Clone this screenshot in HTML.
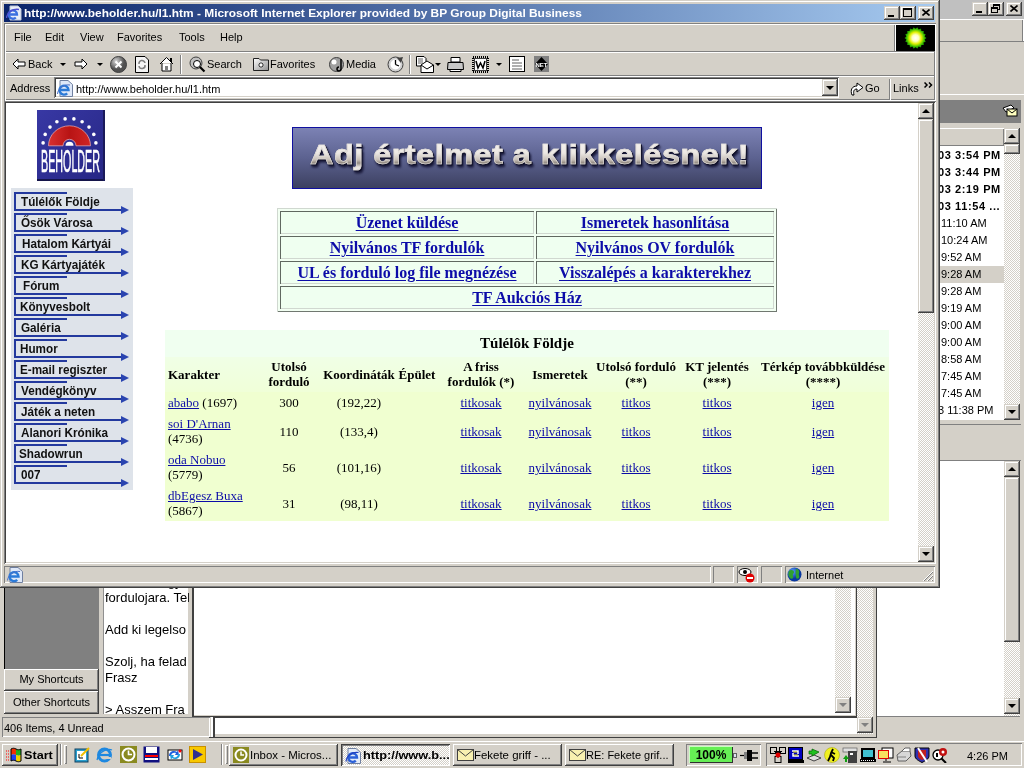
<!DOCTYPE html>
<html><head><meta charset="utf-8">
<style>
*{margin:0;padding:0;box-sizing:border-box}
html,body{-webkit-font-smoothing:antialiased;width:1024px;height:768px;overflow:hidden;background:#d4d0c8;font-family:"Liberation Sans",sans-serif;font-size:11px;color:#000;position:relative}
.a{position:absolute}
.face{background:#d4d0c8}
.rz{box-shadow:inset -1px -1px #404040,inset 1px 1px #fff,inset -2px -2px #808080}
.rz2{box-shadow:inset -1px -1px #404040,inset 1px 1px #d4d0c8,inset -2px -2px #808080,inset 2px 2px #fff}
.sk{box-shadow:inset 1px 1px #808080,inset -1px -1px #fff,inset 2px 2px #404040,inset -2px -2px #d4d0c8}
.tr{box-shadow:inset 1px 1px #fff,inset -1px -1px #808080}
.ts{box-shadow:inset 1px 1px #808080,inset -1px -1px #fff}
.stip{background:repeating-conic-gradient(#fff 0 25%,#d4d0c8 0 50%) 0 0/2px 2px}
.wh{background:#fff}
.t{white-space:nowrap;line-height:13px}
.sb{width:16px;height:16px;background:#d4d0c8}
.arr-up{width:0;height:0;border-left:4px solid transparent;border-right:4px solid transparent;border-bottom:4px solid #000;position:absolute;left:4px;top:6px}
.arr-dn{width:0;height:0;border-left:4px solid transparent;border-right:4px solid transparent;border-top:4px solid #000;position:absolute;left:4px;top:6px}
.serif{font-family:"Liberation Serif",serif}
a{color:#0c0ca8;text-decoration:underline;text-underline-offset:1px}
.lk a{text-underline-offset:2px}
</style></head><body><div style="position:absolute;left:0;top:0;width:1024px;height:768px;will-change:transform">

<!-- ===== Background Outlook window ===== -->
<div class="a" style="left:0;top:0;width:1024px;height:19px;background:#c0c0c0"></div>
<div class="a face rz2" style="left:972px;top:2px;width:16px;height:14px"><div class="a" style="left:4px;top:9px;width:6px;height:2px;background:#000"></div></div>
<div class="a face rz2" style="left:988px;top:2px;width:16px;height:14px"><div class="a" style="left:5px;top:2px;width:7px;height:6px;border:1px solid #000;border-top-width:2px"></div><div class="a face" style="left:3px;top:5px;width:7px;height:6px;border:1px solid #000;border-top-width:2px"></div></div>
<div class="a face rz2" style="left:1006px;top:2px;width:16px;height:14px"><svg class="a" style="left:4px;top:3px" width="8" height="7" viewBox="0 0 8 7"><path d="M0.5 0.5 L7.5 6.5 M7.5 0.5 L0.5 6.5" stroke="#000" stroke-width="1.6"/></svg></div>
<div class="a face" style="left:939px;top:19px;width:85px;height:23px;border-top:1px solid #fff;border-bottom:1px solid #808080"></div><div class="a" style="left:1022px;top:20px;width:1px;height:21px;background:#808080"></div><div class="a" style="left:1023px;top:20px;width:1px;height:21px;background:#fff"></div>
<div class="a face" style="left:939px;top:94px;width:85px;height:1px;background:#fff"></div>
<div class="a" style="left:939px;top:100px;width:82px;height:23px;background:#808080"></div>
<div class="a" style="left:1002px;top:104px;width:16px;height:14px">
<svg width="16" height="14" viewBox="0 0 16 14"><path d="M1 4 L9 1 L12 4 L4 8 Z" fill="#fff" stroke="#000" stroke-width="1"/><rect x="5" y="5" width="10" height="7" fill="#ffffc0" stroke="#000"/><path d="M5 5 L10 9 L15 5" fill="none" stroke="#000"/></svg></div>
<div class="a face tr" style="left:939px;top:128px;width:65px;height:18px"></div>
<div class="a wh" style="left:939px;top:146px;width:65px;height:274px"></div>
<div class="a" style="left:939px;top:266px;width:65px;height:17px;background:#d4d0c8"></div>
<div class="a stip" style="left:1004px;top:128px;width:16px;height:292px"></div>
<div class="a face rz2 sb" style="left:1004px;top:128px"><div class="arr-up"></div></div>
<div class="a face rz2" style="left:1004px;top:144px;width:16px;height:10px"></div>
<div class="a face rz2 sb" style="left:1004px;top:404px"><div class="arr-dn"></div></div>
<div id="olist" class="a t" style="left:940px;top:147px;width:64px;font-size:11px;line-height:17px">
<div style="font-weight:bold;margin-left:-2px;letter-spacing:0.6px">03 3:54 PM</div>
<div style="font-weight:bold;margin-left:-2px;letter-spacing:0.6px">03 3:44 PM</div>
<div style="font-weight:bold;margin-left:-2px;letter-spacing:0.6px">03 2:19 PM</div>
<div style="font-weight:bold;margin-left:-2px;letter-spacing:0.6px">03 11:54 ...</div>
<div style="margin-left:1px">11:10 AM</div>
<div style="margin-left:1px">10:24 AM</div>
<div style="margin-left:1px">9:52 AM</div>
<div style="margin-left:1px">9:28 AM</div>
<div style="margin-left:1px">9:28 AM</div>
<div style="margin-left:1px">9:19 AM</div>
<div style="margin-left:1px">9:00 AM</div>
<div style="margin-left:1px">9:00 AM</div>
<div style="margin-left:1px">8:58 AM</div>
<div style="margin-left:1px">7:45 AM</div>
<div style="margin-left:1px">7:45 AM</div>
<div style="margin-left:-2px">3 11:38 PM</div>
</div>
<div class="a face" style="left:939px;top:424px;width:82px;height:37px;box-shadow:inset 0 1px #808080,inset 0 -1px #808080"></div>
<div class="a wh" style="left:877px;top:461px;width:127px;height:255px"></div>
<div class="a stip" style="left:1004px;top:461px;width:16px;height:255px"></div>
<div class="a face rz2" style="left:1004px;top:477px;width:16px;height:165px"></div>
<div class="a face rz2 sb" style="left:1004px;top:461px"><div class="arr-up"></div></div>
<div class="a face rz2 sb" style="left:1004px;top:698px"><div class="arr-dn"></div></div>

<!-- bottom left outlook -->
<div class="a" style="left:4px;top:587px;width:95px;height:82px;background:#808080;box-shadow:inset 1px 0 #000"></div>
<div class="a face rz" style="left:4px;top:669px;width:95px;height:22px"><div class="a t" style="left:0;width:95px;top:4px;text-align:center">My Shortcuts</div></div>
<div class="a face rz" style="left:4px;top:691px;width:95px;height:23px"><div class="a t" style="left:0;width:95px;top:5px;text-align:center">Other Shortcuts</div></div>
<div class="a wh" style="left:103px;top:587px;width:86px;height:128px;box-shadow:inset -1px -1px #d4d0c8,inset 1px 0 #909090"></div>
<div class="a t" style="left:104px;top:574px;font-size:13px;line-height:16px;width:85px;height:141px;overflow:hidden;clip-path:inset(13px 0 0 0);padding-left:1px">
<div>Ha nem vagy itt a</div><div>fordulojara. Tel</div><div>&nbsp;</div><div>Add ki legelso</div><div>&nbsp;</div><div>Szolj, ha felad</div><div>Frasz</div><div>&nbsp;</div><div>&gt; Asszem Fra</div></div>
<div class="a wh" style="left:192px;top:587px;width:665px;height:130px;box-shadow:inset 2px 0 #404040,inset -1px -1px #404040,inset -2px -2px #d4d0c8"></div>
<div class="a stip" style="left:835px;top:587px;width:16px;height:126px"></div>
<div class="a face rz2 sb" style="left:835px;top:697px"><div class="arr-dn" style="border-top-color:#808080"></div></div>
<div class="a stip" style="left:857px;top:587px;width:16px;height:147px"></div>
<div class="a face rz2 sb" style="left:857px;top:717px"><div class="arr-dn" style="border-top-color:#808080"></div></div>
<div class="a" style="left:873px;top:587px;width:4px;height:151px;box-shadow:inset -1px 0 #404040"></div>
<div class="a" style="left:209px;top:737px;width:668px;height:1px;background:#404040"></div>
<div class="a face ts" style="left:2px;top:717px;width:208px;height:20px"><div class="a t" style="left:2px;top:5px">406 Items, 4 Unread</div></div>
<div class="a wh" style="left:213px;top:717px;width:644px;height:20px;box-shadow:inset 2px 1px #404040,inset 0 -3px #d4d0c8"></div><div class="a" style="left:210px;top:717px;width:3px;height:20px;background:#fff;box-shadow:inset 1px 0 #d4d0c8"></div>
<div class="a face" style="left:877px;top:716px;width:143px;height:22px;box-shadow:inset 0 1px #808080"></div>

<!-- ===== IE window ===== -->
<div id="ie" class="a face" style="left:0;top:0;width:940px;height:588px;box-shadow:inset -1px -1px #404040,inset 1px 1px #d4d0c8,inset -2px -2px #808080,inset 2px 2px #fff">
<!-- title -->
<div class="a" style="left:4px;top:4px;width:931px;height:18px;background:linear-gradient(to right,#0a246a,#a6caf0)"></div>
<div class="a" style="left:6px;top:5px;width:16px;height:16px">
<svg width="16" height="16" viewBox="0 0 16 16"><path d="M4 1 H12 L15 4 V15 H4 Z" fill="#e8eef8" stroke="#c0c8d8"/><path d="M3 9.5 H11 A4.2 4.2 0 1 0 9.8 12.5" fill="none" stroke="#3a70e0" stroke-width="2.3"/><path d="M0.5 13 C1 7 7 3.5 13 4.5" fill="none" stroke="#5050d0" stroke-width="1.4"/></svg></div>
<div class="a t" id="ttl" style="transform:scaleX(1.083);transform-origin:0 0;left:24px;top:5px;color:#fff;font-weight:bold;font-size:11px;line-height:16px">http://www.beholder.hu/l1.htm - Microsoft Internet Explorer provided by BP Group Digital Business</div>
<div class="a face rz2" style="left:884px;top:6px;width:16px;height:14px"><div class="a" style="left:4px;top:9px;width:6px;height:2px;background:#000"></div></div>
<div class="a face rz2" style="left:900px;top:6px;width:16px;height:14px"><div class="a" style="left:3px;top:2px;width:9px;height:9px;border:1px solid #000;border-top-width:2px"></div></div>
<div class="a face rz2" style="left:918px;top:6px;width:16px;height:14px"><svg class="a" style="left:4px;top:3px" width="8" height="7" viewBox="0 0 8 7"><path d="M0.5 0.5 L7.5 6.5 M7.5 0.5 L0.5 6.5" stroke="#000" stroke-width="1.6"/></svg></div>
<!-- menu band -->
<div class="a" style="left:4px;top:23px;width:932px;height:78px;box-shadow:inset 1px 1px #808080,inset -1px -1px #fff,inset 2px 2px #fff,inset -2px -2px #808080"></div>
<div class="a" style="left:6px;top:51px;width:928px;height:1px;background:#808080"></div>
<div class="a" style="left:6px;top:52px;width:928px;height:1px;background:#fff"></div>
<div class="a" style="left:894px;top:25px;width:1px;height:26px;background:#808080"></div>
<div class="a" style="left:895px;top:25px;width:1px;height:26px;background:#fff"></div>
<div class="a t" style="left:14px;top:31px;font-size:11px">File</div>
<div class="a t" style="left:45px;top:31px;font-size:11px">Edit</div>
<div class="a t" style="left:80px;top:31px;font-size:11px">View</div>
<div class="a t" style="left:117px;top:31px;font-size:11px">Favorites</div>
<div class="a t" style="left:179px;top:31px;font-size:11px">Tools</div>
<div class="a t" style="left:220px;top:31px;font-size:11px">Help</div>
<div class="a" style="left:896px;top:25px;width:39px;height:26px;background:#000"><svg width="39" height="26"><defs><radialGradient id="bp"><stop offset="0" stop-color="#fff"/><stop offset="0.3" stop-color="#ffffc0"/><stop offset="0.55" stop-color="#e0f000"/><stop offset="0.8" stop-color="#40c000"/><stop offset="1" stop-color="#108000"/></radialGradient></defs><polygon points="30.5,13.0 28.6,14.6 29.8,16.8 27.5,17.6 27.9,20.1 25.4,20.0 25.0,22.5 22.6,21.6 21.4,23.8 19.5,22.2 17.6,23.8 16.4,21.6 14.0,22.5 13.6,20.0 11.1,20.1 11.5,17.6 9.2,16.8 10.4,14.6 8.5,13.0 10.4,11.4 9.2,9.2 11.5,8.4 11.1,5.9 13.6,6.0 14.0,3.5 16.4,4.4 17.6,2.2 19.5,3.8 21.4,2.2 22.6,4.4 25.0,3.5 25.4,6.0 27.9,5.9 27.5,8.4 29.8,9.2 28.6,11.4" fill="url(#bp)"/></svg></div>
<!-- toolbar band -->
<div class="a" style="left:6px;top:75px;width:928px;height:1px;background:#808080"></div>
<div class="a" style="left:6px;top:76px;width:928px;height:1px;background:#fff"></div>
<div class="a" id="tbicons" style="left:0;top:0">
<svg class="a" style="left:12px;top:57px" width="14" height="14" viewBox="0 0 14 14"><path d="M1 7 L6 2 V5 H13 V9 H6 V12 Z" fill="#fff" stroke="#000" stroke-linejoin="round"/></svg>
<div class="a t" style="left:28px;top:58px">Back</div>
<div class="a" style="left:60px;top:63px;border-left:3px solid transparent;border-right:3px solid transparent;border-top:3px solid #000"></div>
<svg class="a" style="left:74px;top:57px" width="14" height="14" viewBox="0 0 14 14"><path d="M13 7 L8 2 V5 H1 V9 H8 V12 Z" fill="#fff" stroke="#000" stroke-linejoin="round"/></svg>
<div class="a" style="left:97px;top:63px;border-left:3px solid transparent;border-right:3px solid transparent;border-top:3px solid #000"></div>
<svg class="a" style="left:110px;top:56px" width="17" height="17" viewBox="0 0 17 17"><defs><radialGradient id="st" cx="0.35" cy="0.3"><stop offset="0" stop-color="#d8d8d8"/><stop offset="1" stop-color="#505050"/></radialGradient></defs><circle cx="8.5" cy="8.5" r="8" fill="url(#st)" stroke="#404040"/><path d="M5.5 5.5 L11.5 11.5 M11.5 5.5 L5.5 11.5" stroke="#fff" stroke-width="2"/></svg>
<svg class="a" style="left:135px;top:56px" width="14" height="17" viewBox="0 0 14 17"><path d="M0.5 0.5 H10 L13.5 4 V16.5 H0.5 Z" fill="#f4f4f4" stroke="#000"/><path d="M4 8 A3 3 0 0 1 10 7 M10 9 A3 3 0 0 1 4 10" fill="none" stroke="#808080" stroke-width="1.5"/></svg>
<svg class="a" style="left:159px;top:56px" width="15" height="16" viewBox="0 0 15 16"><path d="M1 8 L7.5 1.5 L14 8 M3 7 V15 H12 V7" fill="#fff" stroke="#000"/><rect x="6" y="10" width="3" height="5" fill="#808080"/><rect x="11" y="2" width="2" height="4" fill="#000"/></svg>
<div class="a" style="left:180px;top:55px;width:2px;height:19px;box-shadow:inset 1px 0 #808080,inset -1px 0 #fff"></div>
<svg class="a" style="left:189px;top:56px" width="17" height="17" viewBox="0 0 17 17"><circle cx="7" cy="7" r="6" fill="#c0c0c0" stroke="#404040"/><circle cx="8" cy="8" r="3.5" fill="#fff" stroke="#000"/><path d="M11 11 L15.5 15.5" stroke="#000" stroke-width="2.2"/></svg>
<div class="a t" style="left:207px;top:58px">Search</div>
<svg class="a" style="left:253px;top:57px" width="16" height="14" viewBox="0 0 16 14"><defs><linearGradient id="fv" x1="0" y1="0" x2="1" y2="1"><stop offset="0" stop-color="#fff"/><stop offset="1" stop-color="#909090"/></linearGradient></defs><path d="M0.5 1.5 H6 L7.5 3 H15.5 V13.5 H0.5 Z" fill="url(#fv)" stroke="#202020"/><path d="M8 5 V11 M5 8 H11 M6 6 L10 10 M10 6 L6 10" stroke="#404040" stroke-width="1"/><circle cx="8" cy="8" r="1.2" fill="#fff"/></svg>
<div class="a t" style="left:270px;top:58px">Favorites</div>
<svg class="a" style="left:329px;top:56px" width="17" height="17" viewBox="0 0 17 17"><circle cx="7.5" cy="8.5" r="7" fill="#a0a0a0" stroke="#404040"/><circle cx="5" cy="6" r="2.5" fill="#fff"/><path d="M12 3 V13 A2 2 0 1 1 10 11" fill="none" stroke="#000" stroke-width="1.5"/></svg>
<div class="a t" style="left:346px;top:58px">Media</div>
<svg class="a" style="left:387px;top:56px" width="17" height="17" viewBox="0 0 17 17"><circle cx="8.5" cy="8.5" r="7.5" fill="#d0d0d0" stroke="#404040"/><circle cx="8.5" cy="8.5" r="5" fill="#fff"/><path d="M8.5 8.5 L8.5 4 M8.5 8.5 L12 10" stroke="#000" stroke-width="1.3"/><path d="M10 2 L16 1 L14 7 Z" fill="#404040"/></svg>
<div class="a" style="left:409px;top:55px;width:2px;height:19px;box-shadow:inset 1px 0 #808080,inset -1px 0 #fff"></div>
<svg class="a" style="left:416px;top:56px" width="18" height="17" viewBox="0 0 18 17"><path d="M0.5 0.5 H8 L10 2.5 V10 H0.5 Z" fill="#fff" stroke="#000"/><path d="M2 3 H7 M2 5 H7 M2 7 H7" stroke="#606060"/><path d="M5 9 L11 5 L17.5 9 V16.5 H5 Z" fill="#fff" stroke="#000"/><path d="M5 9 L11 13 L17.5 9" fill="none" stroke="#000"/></svg>
<div class="a" style="left:435px;top:63px;border-left:3px solid transparent;border-right:3px solid transparent;border-top:3px solid #000"></div>
<svg class="a" style="left:447px;top:57px" width="17" height="15" viewBox="0 0 17 15"><path d="M4 0.5 H13 V5 H4 Z" fill="#fff" stroke="#000"/><path d="M1 5.5 H16 L16.5 12.5 H0.5 Z" fill="#c8c8c8" stroke="#000"/><path d="M3 12.5 H14 V14.5 H3 Z" fill="#fff" stroke="#000"/></svg>
<svg class="a" style="left:472px;top:56px" width="17" height="17" viewBox="0 0 17 17"><rect x="1" y="1" width="15" height="15" fill="none" stroke="#000" stroke-width="2" stroke-dasharray="1 1"/><rect x="2.5" y="2.5" width="12" height="12" fill="#fff" stroke="#404040"/><path d="M4 5 L6 12 L8.5 7 L11 12 L13 5" fill="none" stroke="#000" stroke-width="1.5"/></svg>
<div class="a" style="left:496px;top:63px;border-left:3px solid transparent;border-right:3px solid transparent;border-top:3px solid #000"></div>
<svg class="a" style="left:509px;top:56px" width="16" height="16" viewBox="0 0 16 16"><rect x="0.5" y="0.5" width="15" height="15" fill="#fff" stroke="#000"/><path d="M3 4 H10 M3 7 H13 M3 10 H13 M3 13 H13" stroke="#606060"/></svg>
<svg class="a" style="left:534px;top:56px" width="15" height="16" viewBox="0 0 15 16"><rect x="0" y="0" width="15" height="16" fill="#808080"/><path d="M7.5 1 L14 8 L7.5 15 L1 8 Z" fill="#000"/><text x="7.5" y="10.5" font-size="6" font-weight="bold" fill="#fff" text-anchor="middle" font-family="Liberation Sans">NET</text></svg>
</div>
<!-- address band -->

<div class="a t" style="left:10px;top:82px">Address</div>
<div class="a wh" style="left:54px;top:77px;width:785px;height:21px;box-shadow:inset 1px 1px #808080,inset -1px -1px #fff,inset 2px 2px #404040,inset -2px -2px #d4d0c8"></div>
<svg class="a" style="left:56px;top:80px" width="17" height="17" viewBox="0 0 17 17"><path d="M4 0.5 H12 L16.5 4.5 V16.5 H4 Z" fill="#dfe8f8" stroke="#7080a0"/><path d="M4 10 H12.5 A4.5 4.5 0 1 0 11.2 13.3" fill="none" stroke="#2b7ad8" stroke-width="2.4"/><path d="M1.5 14 C2 8 8 4 14 5" fill="none" stroke="#4a70c8" stroke-width="1"/></svg>
<div class="a t" style="left:76px;top:83px">http://www.beholder.hu/l1.htm</div>
<div class="a face rz2" style="left:822px;top:79px;width:16px;height:17px"><div class="a" style="left:4px;top:7px;border-left:4px solid transparent;border-right:4px solid transparent;border-top:4px solid #000"></div></div>
<svg class="a" style="left:850px;top:80px" width="14" height="16" viewBox="0 0 14 16"><path d="M2 15 C0 10 2 6 7 6 V3 L13 7.5 L7 12 V9 C4 9 3 11 4 15 Z" fill="#fff" stroke="#000" stroke-linejoin="round"/></svg>
<div class="a t" style="left:865px;top:82px">Go</div>
<div class="a" style="left:889px;top:79px;width:2px;height:21px;box-shadow:inset 1px 0 #808080,inset -1px 0 #fff"></div>
<div class="a t" style="left:893px;top:82px">Links</div>
<svg class="a" style="left:924px;top:82px" width="9" height="6" viewBox="0 0 9 6"><path d="M0.5 0.5 L3 3 L0.5 5.5 M5 0.5 L7.5 3 L5 5.5" fill="none" stroke="#000" stroke-width="1.5"/></svg>
<!-- content -->
<div class="a wh" style="left:4px;top:101px;width:932px;height:463px;box-shadow:inset 1px 1px #808080,inset -1px -1px #fff,inset 2px 2px #404040,inset -2px -2px #d4d0c8"></div>
<div class="a stip" style="left:918px;top:103px;width:16px;height:459px"></div>
<div class="a face rz2 sb" style="left:918px;top:103px"><div class="arr-up"></div></div>
<div class="a face rz2" style="left:918px;top:119px;width:16px;height:194px"></div>
<div class="a face rz2 sb" style="left:918px;top:546px"><div class="arr-dn"></div></div>
<div id="page" class="a" style="left:6px;top:103px;width:912px;height:459px;overflow:hidden"><div class="a" style="left:-6px;top:-103px;width:940px;height:600px">
<svg class="a" style="left:37px;top:110px" width="68" height="71" viewBox="0 0 68 71">
<defs><linearGradient id="lg" x1="0" y1="0" x2="1" y2="1"><stop offset="0" stop-color="#3838a4"/><stop offset="1" stop-color="#262684"/></linearGradient>
<linearGradient id="rd" x1="0" y1="0" x2="1" y2="0"><stop offset="0" stop-color="#d83030"/><stop offset="0.5" stop-color="#b81414"/><stop offset="1" stop-color="#d02424"/></linearGradient></defs>
<rect x="0" y="0" width="68" height="71" fill="url(#lg)"/>
<rect x="0" y="69" width="68" height="2" fill="#15154a"/><rect x="66" y="0" width="2" height="71" fill="#1a1a5a"/>
<path d="M11.5 35.8 A21 20 0 0 1 53.5 35.8 L39 35.8 A6.5 6.5 0 0 0 26 35.8 Z" fill="url(#rd)" stroke="#f0b0b0" stroke-width="0.7"/>
<path d="M28.5 35.8 A4 4 0 0 1 36.5 35.8 Z" fill="#fff"/>
<circle cx="6.1" cy="32.9" r="1.8" fill="#fff"/><circle cx="8.2" cy="24.4" r="1.8" fill="#fff"/><circle cx="13.0" cy="17.1" r="1.8" fill="#fff"/><circle cx="19.9" cy="11.7" r="1.8" fill="#fff"/><circle cx="28.1" cy="8.9" r="1.8" fill="#fff"/><circle cx="36.9" cy="8.9" r="1.8" fill="#fff"/><circle cx="45.1" cy="11.7" r="1.8" fill="#fff"/><circle cx="52.0" cy="17.1" r="1.8" fill="#fff"/><circle cx="56.8" cy="24.4" r="1.8" fill="#fff"/><circle cx="58.9" cy="32.9" r="1.8" fill="#fff"/><text x="4" y="62" font-family="Liberation Sans" font-size="31" fill="#fff" textLength="59" lengthAdjust="spacingAndGlyphs" stroke="#fff" stroke-width="0.6">BEHOLDER</text>
</svg>
<!--NAV--><div class="a" style="left:11px;top:188px;width:122px;height:302px;background:#dee3ea"></div>
<div class="a" style="left:14px;top:192px;width:53px;height:2px;background:#23399e"></div><div class="a" style="left:14px;top:192px;width:2px;height:19px;background:#23399e"></div><div class="a" style="left:14px;top:209px;width:108px;height:2px;background:#23399e"></div><div class="a" style="left:121px;top:206px;width:0;height:0;border-top:4px solid transparent;border-bottom:4px solid transparent;border-left:8px solid #2a44b0"></div><div class="a t nav" style="left:21px;top:195px;font-size:13px;line-height:14px;color:#111;font-weight:bold;transform:scaleX(0.9);transform-origin:0 0">Túlélők Földje</div>
<div class="a" style="left:14px;top:213px;width:53px;height:2px;background:#23399e"></div><div class="a" style="left:14px;top:213px;width:2px;height:19px;background:#23399e"></div><div class="a" style="left:14px;top:230px;width:108px;height:2px;background:#23399e"></div><div class="a" style="left:121px;top:227px;width:0;height:0;border-top:4px solid transparent;border-bottom:4px solid transparent;border-left:8px solid #2a44b0"></div><div class="a t nav" style="left:21px;top:216px;font-size:13px;line-height:14px;color:#111;font-weight:bold;transform:scaleX(0.9);transform-origin:0 0">Ősök Városa</div>
<div class="a" style="left:14px;top:234px;width:53px;height:2px;background:#23399e"></div><div class="a" style="left:14px;top:234px;width:2px;height:19px;background:#23399e"></div><div class="a" style="left:14px;top:251px;width:108px;height:2px;background:#23399e"></div><div class="a" style="left:121px;top:248px;width:0;height:0;border-top:4px solid transparent;border-bottom:4px solid transparent;border-left:8px solid #2a44b0"></div><div class="a t nav" style="left:22px;top:237px;font-size:13px;line-height:14px;color:#111;font-weight:bold;transform:scaleX(0.9);transform-origin:0 0">Hatalom Kártyái</div>
<div class="a" style="left:14px;top:255px;width:53px;height:2px;background:#23399e"></div><div class="a" style="left:14px;top:255px;width:2px;height:19px;background:#23399e"></div><div class="a" style="left:14px;top:272px;width:108px;height:2px;background:#23399e"></div><div class="a" style="left:121px;top:269px;width:0;height:0;border-top:4px solid transparent;border-bottom:4px solid transparent;border-left:8px solid #2a44b0"></div><div class="a t nav" style="left:21px;top:258px;font-size:13px;line-height:14px;color:#111;font-weight:bold;transform:scaleX(0.9);transform-origin:0 0">KG Kártyajáték</div>
<div class="a" style="left:14px;top:276px;width:53px;height:2px;background:#23399e"></div><div class="a" style="left:14px;top:276px;width:2px;height:19px;background:#23399e"></div><div class="a" style="left:14px;top:293px;width:108px;height:2px;background:#23399e"></div><div class="a" style="left:121px;top:290px;width:0;height:0;border-top:4px solid transparent;border-bottom:4px solid transparent;border-left:8px solid #2a44b0"></div><div class="a t nav" style="left:23px;top:279px;font-size:13px;line-height:14px;color:#111;font-weight:bold;transform:scaleX(0.9);transform-origin:0 0">Fórum</div>
<div class="a" style="left:14px;top:297px;width:53px;height:2px;background:#23399e"></div><div class="a" style="left:14px;top:297px;width:2px;height:19px;background:#23399e"></div><div class="a" style="left:14px;top:314px;width:108px;height:2px;background:#23399e"></div><div class="a" style="left:121px;top:311px;width:0;height:0;border-top:4px solid transparent;border-bottom:4px solid transparent;border-left:8px solid #2a44b0"></div><div class="a t nav" style="left:20px;top:300px;font-size:13px;line-height:14px;color:#111;font-weight:bold;transform:scaleX(0.9);transform-origin:0 0">Könyvesbolt</div>
<div class="a" style="left:14px;top:318px;width:53px;height:2px;background:#23399e"></div><div class="a" style="left:14px;top:318px;width:2px;height:19px;background:#23399e"></div><div class="a" style="left:14px;top:335px;width:108px;height:2px;background:#23399e"></div><div class="a" style="left:121px;top:332px;width:0;height:0;border-top:4px solid transparent;border-bottom:4px solid transparent;border-left:8px solid #2a44b0"></div><div class="a t nav" style="left:21px;top:321px;font-size:13px;line-height:14px;color:#111;font-weight:bold;transform:scaleX(0.9);transform-origin:0 0">Galéria</div>
<div class="a" style="left:14px;top:339px;width:53px;height:2px;background:#23399e"></div><div class="a" style="left:14px;top:339px;width:2px;height:19px;background:#23399e"></div><div class="a" style="left:14px;top:356px;width:108px;height:2px;background:#23399e"></div><div class="a" style="left:121px;top:353px;width:0;height:0;border-top:4px solid transparent;border-bottom:4px solid transparent;border-left:8px solid #2a44b0"></div><div class="a t nav" style="left:20px;top:342px;font-size:13px;line-height:14px;color:#111;font-weight:bold;transform:scaleX(0.9);transform-origin:0 0">Humor</div>
<div class="a" style="left:14px;top:360px;width:53px;height:2px;background:#23399e"></div><div class="a" style="left:14px;top:360px;width:2px;height:19px;background:#23399e"></div><div class="a" style="left:14px;top:377px;width:108px;height:2px;background:#23399e"></div><div class="a" style="left:121px;top:374px;width:0;height:0;border-top:4px solid transparent;border-bottom:4px solid transparent;border-left:8px solid #2a44b0"></div><div class="a t nav" style="left:20px;top:363px;font-size:13px;line-height:14px;color:#111;font-weight:bold;transform:scaleX(0.9);transform-origin:0 0">E-mail regiszter</div>
<div class="a" style="left:14px;top:381px;width:53px;height:2px;background:#23399e"></div><div class="a" style="left:14px;top:381px;width:2px;height:19px;background:#23399e"></div><div class="a" style="left:14px;top:398px;width:108px;height:2px;background:#23399e"></div><div class="a" style="left:121px;top:395px;width:0;height:0;border-top:4px solid transparent;border-bottom:4px solid transparent;border-left:8px solid #2a44b0"></div><div class="a t nav" style="left:21px;top:384px;font-size:13px;line-height:14px;color:#111;font-weight:bold;transform:scaleX(0.9);transform-origin:0 0">Vendégkönyv</div>
<div class="a" style="left:14px;top:402px;width:53px;height:2px;background:#23399e"></div><div class="a" style="left:14px;top:402px;width:2px;height:19px;background:#23399e"></div><div class="a" style="left:14px;top:419px;width:108px;height:2px;background:#23399e"></div><div class="a" style="left:121px;top:416px;width:0;height:0;border-top:4px solid transparent;border-bottom:4px solid transparent;border-left:8px solid #2a44b0"></div><div class="a t nav" style="left:21px;top:405px;font-size:13px;line-height:14px;color:#111;font-weight:bold;transform:scaleX(0.9);transform-origin:0 0">Játék a neten</div>
<div class="a" style="left:14px;top:423px;width:53px;height:2px;background:#23399e"></div><div class="a" style="left:14px;top:423px;width:2px;height:19px;background:#23399e"></div><div class="a" style="left:14px;top:440px;width:108px;height:2px;background:#23399e"></div><div class="a" style="left:121px;top:437px;width:0;height:0;border-top:4px solid transparent;border-bottom:4px solid transparent;border-left:8px solid #2a44b0"></div><div class="a t nav" style="left:21px;top:426px;font-size:13px;line-height:14px;color:#111;font-weight:bold;transform:scaleX(0.9);transform-origin:0 0">Alanori Krónika</div>
<div class="a" style="left:14px;top:444px;width:53px;height:2px;background:#23399e"></div><div class="a" style="left:14px;top:444px;width:2px;height:19px;background:#23399e"></div><div class="a" style="left:14px;top:461px;width:108px;height:2px;background:#23399e"></div><div class="a" style="left:121px;top:458px;width:0;height:0;border-top:4px solid transparent;border-bottom:4px solid transparent;border-left:8px solid #2a44b0"></div><div class="a t nav" style="left:19px;top:447px;font-size:13px;line-height:14px;color:#111;font-weight:bold;transform:scaleX(0.9);transform-origin:0 0">Shadowrun</div>
<div class="a" style="left:14px;top:465px;width:53px;height:2px;background:#23399e"></div><div class="a" style="left:14px;top:465px;width:2px;height:19px;background:#23399e"></div><div class="a" style="left:14px;top:482px;width:108px;height:2px;background:#23399e"></div><div class="a" style="left:121px;top:479px;width:0;height:0;border-top:4px solid transparent;border-bottom:4px solid transparent;border-left:8px solid #2a44b0"></div><div class="a t nav" style="left:21px;top:468px;font-size:13px;line-height:14px;color:#111;font-weight:bold;transform:scaleX(0.9);transform-origin:0 0">007</div>
<!--/NAV--><div class="a" style="left:292px;top:127px;width:470px;height:62px;border:1px solid #1010a0;background:linear-gradient(#7c82b4,#5c6290 50%,#3c4060)"></div>
<div class="a" style="left:310px;top:135px;filter:drop-shadow(1px 1px 0 #12122a) drop-shadow(1px 2px 1px #181838)"><div class="t" id="bantxt" style="font-family:'Liberation Sans';font-weight:bold;font-size:28px;line-height:40px;letter-spacing:0.4px;-webkit-text-stroke:0.6px #e0dcd8;background:linear-gradient(#fbf8f4 0%,#ece8e4 45%,#c8c0b8 62%,#908880 70%,#e8e4e0 80%,#f4f0ec 100%);-webkit-background-clip:text;background-clip:text;color:transparent;transform:scaleX(1.16);transform-origin:0 0">Adj értelmet a klikkelésnek!</div></div>
<div class="a" style="left:277px;top:208px;width:500px;height:104px;background:#f2fff2;box-shadow:inset 1px 1px #d0d8d0,inset -1px -1px #707870"></div>
<div class="a" style="left:280px;top:211px;width:254px;height:23px;background:#effff0;box-shadow:inset 1px 1px #606860,inset -1px -1px #d0d8d0"></div><div class="a t serif lk" style="left:280px;top:213px;width:254px;text-align:center;font-size:16px;line-height:19px;font-weight:bold"><a>Üzenet küldése</a></div>
<div class="a" style="left:536px;top:211px;width:238px;height:23px;background:#effff0;box-shadow:inset 1px 1px #606860,inset -1px -1px #d0d8d0"></div><div class="a t serif lk" style="left:536px;top:213px;width:238px;text-align:center;font-size:16px;line-height:19px;font-weight:bold"><a>Ismeretek hasonlítása</a></div>
<div class="a" style="left:280px;top:236px;width:254px;height:23px;background:#effff0;box-shadow:inset 1px 1px #606860,inset -1px -1px #d0d8d0"></div><div class="a t serif lk" style="left:280px;top:238px;width:254px;text-align:center;font-size:16px;line-height:19px;font-weight:bold"><a>Nyilvános TF fordulók</a></div>
<div class="a" style="left:536px;top:236px;width:238px;height:23px;background:#effff0;box-shadow:inset 1px 1px #606860,inset -1px -1px #d0d8d0"></div><div class="a t serif lk" style="left:536px;top:238px;width:238px;text-align:center;font-size:16px;line-height:19px;font-weight:bold"><a>Nyilvános OV fordulók</a></div>
<div class="a" style="left:280px;top:261px;width:254px;height:23px;background:#effff0;box-shadow:inset 1px 1px #606860,inset -1px -1px #d0d8d0"></div><div class="a t serif lk" style="left:280px;top:263px;width:254px;text-align:center;font-size:16px;line-height:19px;font-weight:bold"><a>UL és forduló log file megnézése</a></div>
<div class="a" style="left:536px;top:261px;width:238px;height:23px;background:#effff0;box-shadow:inset 1px 1px #606860,inset -1px -1px #d0d8d0"></div><div class="a t serif lk" style="left:536px;top:263px;width:238px;text-align:center;font-size:16px;line-height:19px;font-weight:bold"><a>Visszalépés a karakterekhez</a></div>
<div class="a" style="left:280px;top:286px;width:494px;height:23px;background:#effff0;box-shadow:inset 1px 1px #606860,inset -1px -1px #d0d8d0"></div><div class="a t serif lk" style="left:280px;top:288px;width:494px;text-align:center;font-size:16px;line-height:19px;font-weight:bold"><a>TF Aukciós Ház</a></div>
<div class="a" style="left:165px;top:330px;width:724px;height:27px;background:#f0fff0"></div>
<div class="a" style="left:165px;top:357px;width:724px;height:35px;background:linear-gradient(#f0ffe6,#f0ffd8)"></div>
<div class="a" style="left:165px;top:392px;width:724px;height:129px;background:#f0ffd0"></div>
<div class="a t serif" style="left:165px;top:334px;width:820px;text-align:center;font-size:15px;line-height:18px;font-weight:bold;width:724px">Túlélôk Földje</div>
<div class="a t serif" style="left:168px;top:367px;font-size:13px;line-height:15px;font-weight:bold">Karakter</div><div class="a t serif" style="left:209.0px;top:359px;width:160px;text-align:center;font-size:13px;line-height:15px;font-weight:bold;">Utolsó<br>forduló</div><div class="a t serif" style="left:279.0px;top:367px;width:160px;text-align:center;font-size:13px;line-height:15px;font-weight:bold;">Koordináták</div><div class="a t serif" style="left:337.0px;top:367px;width:160px;text-align:center;font-size:13px;line-height:15px;font-weight:bold;">Épület</div><div class="a t serif" style="left:401.0px;top:359px;width:160px;text-align:center;font-size:13px;line-height:15px;font-weight:bold;">A friss<br>fordulók (*)</div><div class="a t serif" style="left:480.0px;top:367px;width:160px;text-align:center;font-size:13px;line-height:15px;font-weight:bold;">Ismeretek</div><div class="a t serif" style="left:556.0px;top:359px;width:160px;text-align:center;font-size:13px;line-height:15px;font-weight:bold;">Utolsó forduló<br>(**)</div><div class="a t serif" style="left:637.0px;top:359px;width:160px;text-align:center;font-size:13px;line-height:15px;font-weight:bold;">KT jelentés<br>(***)</div><div class="a t serif" style="left:743.0px;top:359px;width:160px;text-align:center;font-size:13px;line-height:15px;font-weight:bold;">Térkép továbbküldése<br>(****)</div><div class="a t serif" style="left:168px;top:395px;font-size:13px;line-height:15px"><a>ababo</a> (1697)</div><div class="a t serif" style="left:209.0px;top:395px;width:160px;text-align:center;font-size:13px;line-height:15px;">300</div><div class="a t serif" style="left:279.0px;top:395px;width:160px;text-align:center;font-size:13px;line-height:15px;">(192,22)</div><div class="a t serif" style="left:401.0px;top:395px;width:160px;text-align:center;font-size:13px;line-height:15px;"><a>titkosak</a></div><div class="a t serif" style="left:480.0px;top:395px;width:160px;text-align:center;font-size:13px;line-height:15px;"><a>nyilvánosak</a></div><div class="a t serif" style="left:556.0px;top:395px;width:160px;text-align:center;font-size:13px;line-height:15px;"><a>titkos</a></div><div class="a t serif" style="left:637.0px;top:395px;width:160px;text-align:center;font-size:13px;line-height:15px;"><a>titkos</a></div><div class="a t serif" style="left:743.0px;top:395px;width:160px;text-align:center;font-size:13px;line-height:15px;"><a>igen</a></div>
<div class="a t serif" style="left:168px;top:416px;font-size:13px;line-height:15px"><a>soi D'Arnan</a><br>(4736)</div><div class="a t serif" style="left:209.0px;top:424px;width:160px;text-align:center;font-size:13px;line-height:15px;">110</div><div class="a t serif" style="left:279.0px;top:424px;width:160px;text-align:center;font-size:13px;line-height:15px;">(133,4)</div><div class="a t serif" style="left:401.0px;top:424px;width:160px;text-align:center;font-size:13px;line-height:15px;"><a>titkosak</a></div><div class="a t serif" style="left:480.0px;top:424px;width:160px;text-align:center;font-size:13px;line-height:15px;"><a>nyilvánosak</a></div><div class="a t serif" style="left:556.0px;top:424px;width:160px;text-align:center;font-size:13px;line-height:15px;"><a>titkos</a></div><div class="a t serif" style="left:637.0px;top:424px;width:160px;text-align:center;font-size:13px;line-height:15px;"><a>titkos</a></div><div class="a t serif" style="left:743.0px;top:424px;width:160px;text-align:center;font-size:13px;line-height:15px;"><a>igen</a></div>
<div class="a t serif" style="left:168px;top:452px;font-size:13px;line-height:15px"><a>oda Nobuo</a><br>(5779)</div><div class="a t serif" style="left:209.0px;top:460px;width:160px;text-align:center;font-size:13px;line-height:15px;">56</div><div class="a t serif" style="left:279.0px;top:460px;width:160px;text-align:center;font-size:13px;line-height:15px;">(101,16)</div><div class="a t serif" style="left:401.0px;top:460px;width:160px;text-align:center;font-size:13px;line-height:15px;"><a>titkosak</a></div><div class="a t serif" style="left:480.0px;top:460px;width:160px;text-align:center;font-size:13px;line-height:15px;"><a>nyilvánosak</a></div><div class="a t serif" style="left:556.0px;top:460px;width:160px;text-align:center;font-size:13px;line-height:15px;"><a>titkos</a></div><div class="a t serif" style="left:637.0px;top:460px;width:160px;text-align:center;font-size:13px;line-height:15px;"><a>titkos</a></div><div class="a t serif" style="left:743.0px;top:460px;width:160px;text-align:center;font-size:13px;line-height:15px;"><a>igen</a></div>
<div class="a t serif" style="left:168px;top:488px;font-size:13px;line-height:15px"><a>dbEgesz Buxa</a><br>(5867)</div><div class="a t serif" style="left:209.0px;top:496px;width:160px;text-align:center;font-size:13px;line-height:15px;">31</div><div class="a t serif" style="left:279.0px;top:496px;width:160px;text-align:center;font-size:13px;line-height:15px;">(98,11)</div><div class="a t serif" style="left:401.0px;top:496px;width:160px;text-align:center;font-size:13px;line-height:15px;"><a>titkosak</a></div><div class="a t serif" style="left:480.0px;top:496px;width:160px;text-align:center;font-size:13px;line-height:15px;"><a>nyilvánosak</a></div><div class="a t serif" style="left:556.0px;top:496px;width:160px;text-align:center;font-size:13px;line-height:15px;"><a>titkos</a></div><div class="a t serif" style="left:637.0px;top:496px;width:160px;text-align:center;font-size:13px;line-height:15px;"><a>titkos</a></div><div class="a t serif" style="left:743.0px;top:496px;width:160px;text-align:center;font-size:13px;line-height:15px;"><a>igen</a></div>
</div></div>
<!-- status bar -->
<div class="a ts" style="left:4px;top:566px;width:707px;height:17px"></div>
<svg class="a" style="left:6px;top:567px" width="17" height="16" viewBox="0 0 17 16"><path d="M4 0.5 H12 L16.5 4.5 V15.5 H4 Z" fill="#dfe8f8" stroke="#7080a0"/><path d="M4 9.5 H12.5 A4.5 4.5 0 1 0 11.2 12.8" fill="none" stroke="#2b7ad8" stroke-width="2.4"/><path d="M1.5 13.5 C2 7.5 8 3.5 14 4.5" fill="none" stroke="#4a70c8" stroke-width="1"/></svg>
<div class="a ts" style="left:713px;top:566px;width:21px;height:17px"></div>
<div class="a ts" style="left:737px;top:566px;width:21px;height:17px"></div>
<svg class="a" style="left:738px;top:567px" width="18" height="16" viewBox="0 0 18 16"><ellipse cx="7" cy="5" rx="6" ry="3.5" fill="#fff" stroke="#000"/><circle cx="7" cy="5" r="2" fill="#000"/><circle cx="12" cy="11" r="4.5" fill="#e00000"/><rect x="9" y="10" width="6" height="2" fill="#fff"/></svg>
<div class="a ts" style="left:761px;top:566px;width:21px;height:17px"></div>
<div class="a ts" style="left:785px;top:566px;width:150px;height:17px"></div>
<svg class="a" style="left:787px;top:567px" width="15" height="15" viewBox="0 0 15 15"><defs><radialGradient id="gl" cx="0.35" cy="0.3"><stop offset="0" stop-color="#60a0ff"/><stop offset="1" stop-color="#0838a0"/></radialGradient></defs><circle cx="7.5" cy="7.5" r="7" fill="url(#gl)"/><path d="M2 4 C4 2 7 3 7 5 C7 7 5 7 6 9 C7 11 5 13 3 11 C1 9 1 6 2 4 Z M9 2 C11 2 13 4 12 6 C11 8 13 9 12 11 C11 12 9 12 9 10 C9 8 8 6 9 2 Z" fill="#30a030"/></svg>
<div class="a t" style="left:806px;top:569px">Internet</div>
<svg class="a" style="left:922px;top:570px" width="12" height="12" viewBox="0 0 12 12"><path d="M11 1 L1 11 M11 5 L5 11 M11 9 L9 11" stroke="#fff" stroke-width="1"/><path d="M11 2 L2 11 M11 6 L6 11 M11 10 L10 11" stroke="#808080" stroke-width="1"/></svg>
</div>

<!-- ===== Taskbar ===== -->
<div id="tb" class="a face" style="left:0;top:740px;width:1024px;height:28px;box-shadow:inset 0 1px #d4d0c8,inset 0 2px #fff">
<div class="a face rz" style="left:2px;top:4px;width:56px;height:22px"></div>
<svg class="a" style="left:5px;top:7px" width="18" height="16" viewBox="0 0 18 16"><path d="M1 4 H5 M1 7 H5 M1 10 H5 M1 13 H5" stroke="#f00" stroke-width="1" stroke-dasharray="1 1"/><path d="M6 2 C8 1 9 1 11 2 V8 C9 7 8 7 6 8 Z" fill="#f03000"/><path d="M11 2 C13 3 14 3 16 2 V8 C14 9 13 9 11 8 Z" fill="#20b020"/><path d="M6 8 C8 7 9 7 11 8 V14 C9 13 8 13 6 14 Z" fill="#2040f0"/><path d="M11 8 C13 9 14 9 16 8 V14 C14 15 13 15 11 14 Z" fill="#f0d000"/><path d="M6 2 C8 1 9 1 11 2 C13 3 14 3 16 2 V14 C14 15 13 15 11 14 C9 13 8 13 6 14 Z" fill="none" stroke="#000"/></svg>
<div class="a t" style="left:24px;top:9px;font-weight:bold;font-size:11px;transform:scaleX(1.15);transform-origin:0 0">Start</div>
<div class="a" style="left:60px;top:4px;width:2px;height:21px;box-shadow:inset 1px 0 #808080,inset -1px 0 #fff"></div>
<div class="a" style="left:64px;top:5px;width:3px;height:19px;box-shadow:inset 1px 1px #fff,inset -1px -1px #808080"></div>
<svg class="a" style="left:74px;top:6px" width="17" height="17" viewBox="0 0 17 17"><rect x="1" y="3" width="13" height="13" fill="#2aa0d0" stroke="#104060"/><rect x="3" y="5" width="9" height="9" fill="#fff"/><path d="M5 8 V12 H9" fill="none" stroke="#000"/><path d="M7 10 L15 2" stroke="#f0c000" stroke-width="2"/></svg>
<svg class="a" style="left:96px;top:6px" width="17" height="17" viewBox="0 0 17 17"><circle cx="8.5" cy="9" r="6" fill="none" stroke="#1e88e0" stroke-width="3"/><path d="M3 9 H14" stroke="#1e88e0" stroke-width="2.2"/><path d="M9 12 H15" stroke="#d4d0c8" stroke-width="2"/><path d="M1 14 C3 5 12 2 16 4" fill="none" stroke="#1e88e0" stroke-width="1.2"/></svg>
<svg class="a" style="left:120px;top:6px" width="17" height="17" viewBox="0 0 17 17"><rect x="0" y="0" width="17" height="17" fill="#8a8a20"/><circle cx="8.5" cy="8.5" r="6" fill="#8a8a20" stroke="#fff" stroke-width="2"/><path d="M8.5 4.5 V8.5 H12" fill="none" stroke="#fff" stroke-width="1.6"/></svg>
<svg class="a" style="left:143px;top:6px" width="17" height="17" viewBox="0 0 17 17"><path d="M0.5 0.5 H16.5 V16.5 H0.5 Z" fill="#101080"/><rect x="3" y="1" width="11" height="6" fill="#fff"/><rect x="2" y="9" width="13" height="2" fill="#f00"/><rect x="2" y="12" width="13" height="2" fill="#fff"/></svg>
<svg class="a" style="left:166px;top:6px" width="17" height="17" viewBox="0 0 17 17"><rect x="2" y="4" width="14" height="10" fill="#fff" stroke="#000"/><path d="M3 10 C3 5 8 4 11 6 L12 4 L13 9 L9 9 L10 7 C8 6 5 7 5 10 Z" fill="#2060e0"/><path d="M14 8 C14 13 9 14 6 12 L5 14 L4 9 L8 9 L7 11 C9 12 12 11 12 8 Z" fill="#20a0e0"/><circle cx="14" cy="5" r="1.5" fill="#f00"/></svg>
<svg class="a" style="left:189px;top:6px" width="17" height="17" viewBox="0 0 17 17"><rect x="0.5" y="0.5" width="16" height="16" fill="#f8c800" stroke="#c89000"/><path d="M4 3 L14 8.5 L4 14 Z" fill="#303090"/></svg>
<div class="a" style="left:221px;top:4px;width:2px;height:21px;box-shadow:inset 1px 0 #808080,inset -1px 0 #fff"></div>
<div class="a" style="left:225px;top:5px;width:3px;height:19px;box-shadow:inset 1px 1px #fff,inset -1px -1px #808080"></div>
<div class="a face rz" style="left:229px;top:4px;width:109px;height:22px"></div>
<svg class="a" style="left:233px;top:7px" width="16" height="16" viewBox="0 0 16 16"><rect x="0" y="0" width="16" height="16" fill="#8a8a20"/><circle cx="8" cy="8" r="5.5" fill="#8a8a20" stroke="#fff" stroke-width="2"/><path d="M8 4.5 V8 H11" fill="none" stroke="#fff" stroke-width="1.5"/></svg>
<div class="a t" style="left:250px;top:9px;transform:scaleX(1.04);transform-origin:0 0">Inbox - Micros...</div>
<div class="a" style="left:341px;top:4px;width:109px;height:22px;background:repeating-conic-gradient(#fff 0 25%,#d4d0c8 0 50%) 0 0/2px 2px;box-shadow:inset 1px 1px #404040,inset -1px -1px #fff,inset 2px 2px #808080"></div>
<svg class="a" style="left:345px;top:8px" width="16" height="16" viewBox="0 0 16 16"><path d="M3 0.5 H11 L15.5 4.5 V15.5 H3 Z" fill="#e4ecf8" stroke="#7080a0"/><path d="M3.5 9.5 H12 A4.3 4.3 0 1 0 10.8 12.6" fill="none" stroke="#2b60d8" stroke-width="2.4"/><path d="M1 13.5 C1.5 7.5 7.5 3.5 13.5 4.5" fill="none" stroke="#2040c0" stroke-width="1.2"/></svg>
<div class="a t" style="left:363px;top:9px;font-weight:bold;transform:scaleX(1.16);transform-origin:0 0">http://www.b...</div>
<div class="a face rz" style="left:453px;top:4px;width:109px;height:22px"></div>
<svg class="a" style="left:457px;top:9px" width="17" height="12" viewBox="0 0 17 12"><rect x="0.5" y="0.5" width="16" height="11" fill="#f8f0b0" stroke="#404040"/><path d="M0.5 0.5 L8.5 7 L16.5 0.5" fill="none" stroke="#404040"/></svg>
<div class="a t" style="left:474px;top:9px;transform:scaleX(1.04);transform-origin:0 0">Fekete griff - ...</div>
<div class="a face rz" style="left:565px;top:4px;width:109px;height:22px"></div>
<svg class="a" style="left:569px;top:9px" width="17" height="12" viewBox="0 0 17 12"><rect x="0.5" y="0.5" width="16" height="11" fill="#f8f0b0" stroke="#404040"/><path d="M0.5 0.5 L8.5 7 L16.5 0.5" fill="none" stroke="#404040"/></svg>
<div class="a t" style="left:586px;top:9px">RE: Fekete grif...</div>
<div class="a ts" style="left:686px;top:4px;width:75px;height:22px"></div>
<div class="a" style="left:689px;top:6px;width:44px;height:17px;background:#66ee55;box-shadow:inset 1px 1px #c8ffc0,inset -1px -1px #303030"></div>
<div class="a t" style="left:689px;top:8px;width:44px;text-align:center;font-weight:bold;font-size:12px;line-height:14px">100%</div>
<div class="a" style="left:733px;top:13px;width:4px;height:5px;background:#e0e0f0;border:1px solid #606060"></div>
<svg class="a" style="left:740px;top:10px" width="18" height="11" viewBox="0 0 18 11"><path d="M0 5.5 H4" stroke="#000" stroke-width="1.2"/><rect x="4" y="2" width="4" height="7" fill="#808080"/><rect x="7" y="0" width="5" height="11" fill="#000"/><path d="M12 3 H18 M12 8 H18" stroke="#000" stroke-width="1.4"/></svg>
<div class="a ts" style="left:766px;top:3px;width:256px;height:23px"></div>

<svg class="a" style="left:770px;top:7px" width="16" height="16" viewBox="0 0 16 16"><rect x="0.5" y="0.5" width="6" height="6" fill="#d4d0c8" stroke="#000"/><rect x="9.5" y="0.5" width="6" height="6" fill="#d4d0c8" stroke="#000"/><rect x="5" y="9.5" width="6" height="6" fill="#d4d0c8" stroke="#000"/><path d="M4 4 L8 8 L12 4 M8 8 V11" stroke="#000"/><circle cx="8" cy="8" r="2.5" fill="#e00000"/></svg>
<svg class="a" style="left:788px;top:7px" width="16" height="16" viewBox="0 0 16 16"><rect x="0.5" y="0.5" width="14" height="12" fill="#0000c0" stroke="#000"/><rect x="0" y="13" width="16" height="3" fill="#000"/><path d="M4 4 H10 V7 M11 9 H5 V6" fill="none" stroke="#fff" stroke-width="1.5"/><path d="M5 5 H9 M10 8 H6" stroke="#e0e000"/></svg>
<svg class="a" style="left:806px;top:7px" width="16" height="16" viewBox="0 0 16 16"><path d="M1 11 L8 8 L15 11 L8 14 Z" fill="#e0e0e0" stroke="#404040"/><path d="M3 6 L10 2 V4 H13 V7 H10 V9 Z" fill="#20c020" stroke="#006000" stroke-width="0.7" transform="rotate(180 8 5.5)"/></svg>
<svg class="a" style="left:824px;top:7px" width="16" height="16" viewBox="0 0 16 16"><circle cx="8" cy="8" r="7.5" fill="#f0f020" stroke="#a0a000" stroke-width="0.5"/><path d="M9 2 L7 6 L6 10 L4 14 M7 8 L10 11 L9 14 M7 5 L11 7" stroke="#000" stroke-width="1.8" fill="none"/></svg>
<svg class="a" style="left:842px;top:7px" width="16" height="16" viewBox="0 0 16 16"><rect x="1" y="1" width="14" height="4" fill="#e0e0e0" stroke="#606060" stroke-width="0.7"/><rect x="6" y="4" width="9" height="12" fill="#404040"/><rect x="8" y="6" width="3" height="2" fill="#fff"/><path d="M1 12 L4 8 L7 12 H5 V15 H3 V12 Z" fill="#10a010"/></svg>
<svg class="a" style="left:860px;top:7px" width="16" height="16" viewBox="0 0 16 16"><rect x="1" y="1" width="14" height="11" fill="#000"/><rect x="3" y="3" width="10" height="7" fill="#40c0d0"/><rect x="0" y="12" width="16" height="3" fill="#000"/><path d="M1 13.5 H15" stroke="#fff" stroke-dasharray="1 1"/></svg>
<svg class="a" style="left:878px;top:7px" width="16" height="16" viewBox="0 0 16 16"><rect x="4" y="1" width="11" height="10" fill="#fff" stroke="#000"/><rect x="0.5" y="3.5" width="10" height="8" fill="#f8e060" stroke="#e00000"/><path d="M8 12 V14 M5 15 H13" stroke="#000"/></svg>
<svg class="a" style="left:896px;top:7px" width="16" height="16" viewBox="0 0 16 16"><path d="M1 8 L6 4 H14 L15 9 L10 14 H2 Z" fill="#d8d8d8" stroke="#606060"/><path d="M6 4 L9 1 H14 L14 4" fill="#fff" stroke="#606060"/><path d="M2 10 H10" stroke="#808080"/></svg>
<svg class="a" style="left:914px;top:7px" width="16" height="16" viewBox="0 0 16 16"><path d="M1 1 H15 V9 C15 12 11 14 8 15.5 C5 14 1 12 1 9 Z" fill="#3030b0" stroke="#000"/><path d="M4 3 H12 V9 C12 11 10 12 8 13 C6 12 4 11 4 9 Z" fill="#c02020"/><path d="M4 1 L13 15" stroke="#fff" stroke-width="2"/></svg>
<svg class="a" style="left:932px;top:7px" width="16" height="16" viewBox="0 0 16 16"><circle cx="6" cy="8" r="5" fill="#fff" stroke="#000" stroke-width="1.3"/><path d="M9.5 11.5 L14 16" stroke="#000" stroke-width="2"/><circle cx="11" cy="5" r="4" fill="#c01010"/><circle cx="11" cy="5" r="1.5" fill="#fff"/><rect x="4" y="6" width="2" height="4" fill="#000"/></svg>
<div class="a t" style="left:967px;top:10px">4:26 PM</div>
</div>

</div></body></html>
